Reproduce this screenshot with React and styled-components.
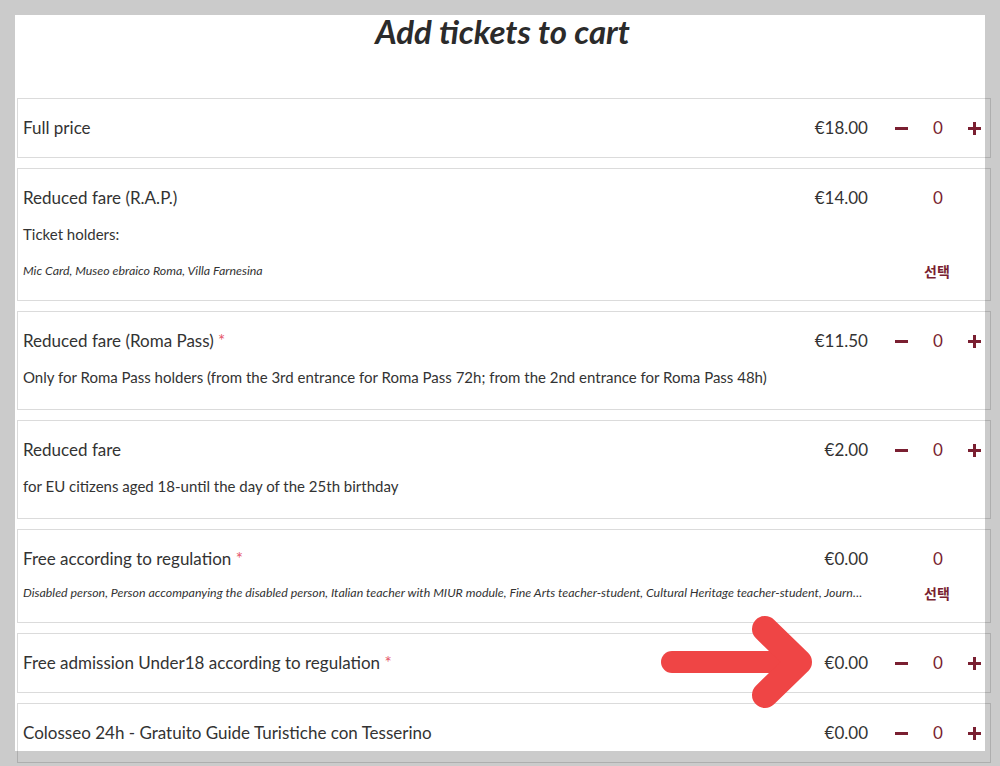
import styled, { createGlobalStyle } from "styled-components";

// ===== Data =====
const tickets = [
  { name: "Full price", price: "€18.00", stepper: true },
  {
    name: "Reduced fare (R.A.P.)",
    price: "€14.00",
    desc: "Ticket holders:",
    note: "Mic Card, Museo ebraico Roma, Villa Farnesina",
  },
  {
    name: "Reduced fare (Roma Pass)",
    required: true,
    price: "€11.50",
    desc: "Only for Roma Pass holders (from the 3rd entrance for Roma Pass 72h; from the 2nd entrance for Roma Pass 48h)",
    stepper: true,
  },
  {
    name: "Reduced fare",
    price: "€2.00",
    desc: "for EU citizens aged 18-until the day of the 25th birthday",
    stepper: true,
  },
  {
    name: "Free according to regulation",
    required: true,
    price: "€0.00",
    note: "Disabled person, Person accompanying the disabled person, Italian teacher with MIUR module, Fine Arts teacher-student, Cultural Heritage teacher-student, Journalist, Tour guide, Interpreter",
  },
  {
    name: "Free admission Under18 according to regulation",
    required: true,
    price: "€0.00",
    stepper: true,
  },
  {
    name: "Colosseo 24h - Gratuito Guide Turistiche con Tesserino",
    price: "€0.00",
    stepper: true,
  },
];

// ===== Logic =====
export default function App() {
  return (
    <>
      <GlobalStyle />
      <Page>
        <Sheet>
          <Title>Add tickets to cart</Title>

          <List>
            {tickets.map((t) => (
              <Row key={t.name}>
                <Head>
                  <Name>
                    {t.name}
                    {t.required && <Required> *</Required>}
                  </Name>
                  <Price>{t.price}</Price>
                </Head>

                <Controls>
                  <span>{t.stepper && <Sign aria-label="minus" />}</span>
                  <Count>0</Count>
                  <span>{t.stepper && <Sign $plus aria-label="plus" />}</span>
                </Controls>

                {t.desc && <Desc>{t.desc}</Desc>}
                {t.note && (
                  <>
                    <Note title={t.note}>{t.note}</Note>
                    <Select>선택</Select>
                  </>
                )}
              </Row>
            ))}
          </List>

          {/* Red pointer arrow */}
          <Arrow width="180" height="120" viewBox="0 0 180 120">
            <g
              fill="none"
              stroke="#ef4545"
              strokeLinecap="round"
              strokeLinejoin="round"
            >
              <line x1="22" y1="57" x2="146" y2="57" strokeWidth="22" />
              <polyline points="115,24 149,57 115,90" strokeWidth="26" />
            </g>
          </Arrow>
        </Sheet>
      </Page>
    </>
  );
}

// ===== Styling =====
const GlobalStyle = createGlobalStyle`
  html, body {
    margin: 0;
    height: 100%;
    overflow: hidden;
    background: #cbcbcb;
  }
  body {
    font-family: Lato, "Noto Sans CJK KR", sans-serif;
    color: #333;
  }
`;

const Page = styled.div`
  padding: 15px 0 0 15px;
`;

const Sheet = styled.div`
  position: relative;
  width: 970px;
  height: 736px;
  background: #fff;
`;

const Title = styled.h1`
  margin: 0;
  padding-left: 5px;
  height: 34px;
  font-size: 33px;
  line-height: 33px;
  font-weight: 700;
  font-style: italic;
  text-align: center;
  color: #2b2b2b;
`;

const List = styled.div`
  display: flex;
  flex-direction: column;
  gap: 10px;
  margin: 49px 0 0 2px;
`;

const Row = styled.div`
  display: grid;
  grid-template-columns: 1fr 122px;
  width: 974px;
  box-sizing: border-box;
  border: 1px solid rgba(0, 0, 0, 0.14);
  padding: 18px 0 18px 5px;
`;

const Head = styled.div`
  display: flex;
  align-items: center;
  justify-content: space-between;
  min-width: 0;
  height: 22px;
  font-size: 17px;
  line-height: 22px;
`;

const Name = styled.span`
  color: #333;
`;

const Required = styled.span`
  color: #e5566a;
`;

const Price = styled.span`
  color: #333;
`;

const Controls = styled.div`
  display: grid;
  grid-template-columns: 16px 34px 40px 32px;
  align-items: center;
  height: 22px;

  & > span:first-child {
    grid-column: 2;
    display: flex;
    justify-content: center;
  }
  & > span:last-child {
    display: flex;
    justify-content: center;
  }
`;

const Count = styled.span`
  text-align: center;
  font-size: 17px;
  line-height: 22px;
  color: #7a1f31;
`;

const Sign = styled.span`
  position: relative;
  display: block;
  width: 13px;
  height: 13px;

  &::before,
  &::after {
    content: "";
    position: absolute;
    background: #7a1f31;
  }
  &::before {
    left: 0;
    right: 0;
    top: 5px;
    height: 3px;
  }
  &::after {
    display: ${(p) => (p.$plus ? "block" : "none")};
    top: 0;
    bottom: 0;
    left: 5px;
    width: 3px;
  }
`;

const Desc = styled.div`
  grid-column: 1 / -1;
  height: 22px;
  margin: 14px 0 3px;
  font-size: 15px;
  line-height: 22px;
  color: #333;
  white-space: nowrap;
`;

const Note = styled.div`
  grid-column: 1;
  min-width: 0;
  height: 16px;
  margin: 15px 0 3px;
  font-size: 12.4px;
  line-height: 16px;
  font-style: italic;
  color: #333;
  white-space: nowrap;
  overflow: hidden;
  text-overflow: ellipsis;
`;

const Select = styled.div`
  grid-column: 2;
  justify-self: start;
  height: 16px;
  margin: 15px 0 3px 56px;
  font-family: "Noto Sans CJK KR", sans-serif;
  font-size: 14px;
  line-height: 16px;
  font-weight: 700;
  color: #7a1f31;
  white-space: nowrap;
`;

const Arrow = styled.svg`
  position: absolute;
  left: 635px;
  top: 590px;
`;
